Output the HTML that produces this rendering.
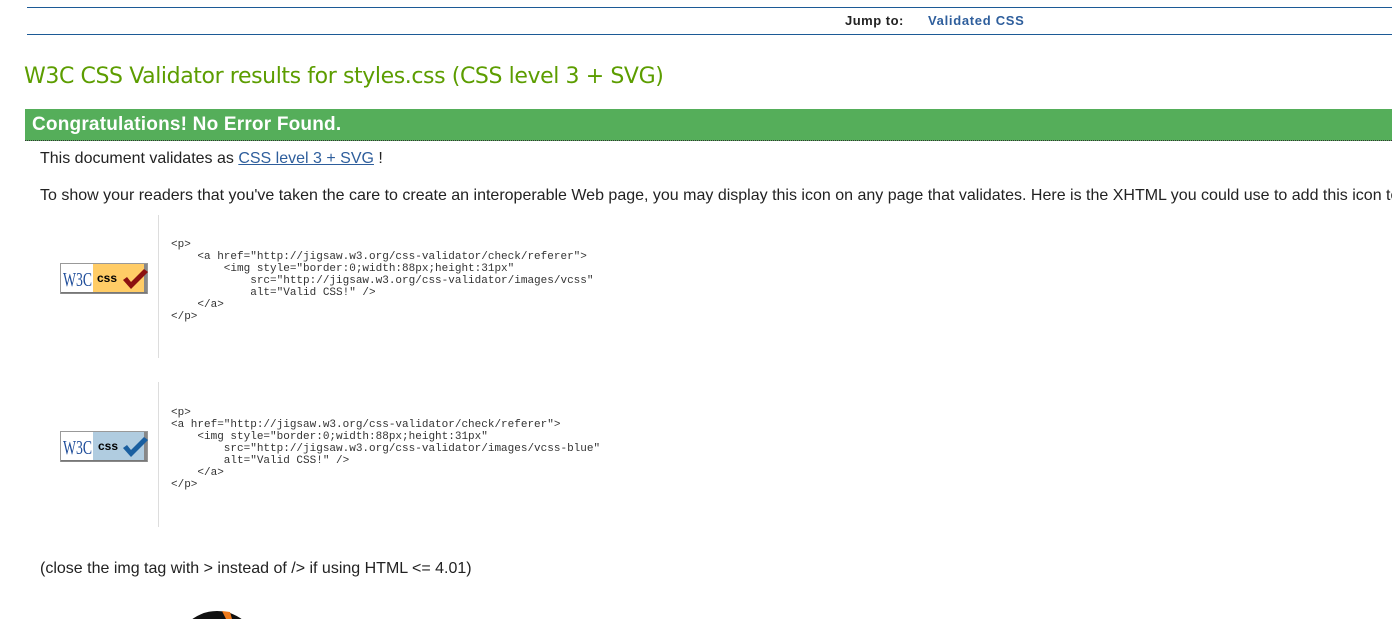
<!DOCTYPE html>
<html><head><meta charset="utf-8"><style>
html,body{margin:0;background:#fff;font-family:"Liberation Sans",Arial,sans-serif;width:1392px;height:619px;overflow:hidden;position:relative}
.a{position:absolute;white-space:pre}
.hl{position:absolute;left:27px;right:0;height:1px;background:#1c5a96}
pre{position:absolute;margin:0;font-family:"Liberation Mono",monospace;font-size:11px;line-height:12px;color:#333}
.vl{position:absolute;left:158px;width:1px;background:#ddd}
</style></head><body>
<div class="hl" style="top:7px"></div>
<div class="hl" style="top:34px"></div>
<div class="a" style="left:845px;top:13px;font-size:13px;font-weight:bold;color:#222;letter-spacing:0.5px">Jump to:</div>
<div class="a" style="left:928px;top:13px;font-size:13px;font-weight:bold;color:#2e5e9c;letter-spacing:0.7px">Validated CSS</div>
<div class="a" style="left:24px;top:64px;font-family:'DejaVu Sans',sans-serif;font-size:22px;color:#5c9d00;letter-spacing:-0.4px">W3C CSS Validator results for styles.css (CSS level 3 + SVG)</div>
<div style="position:absolute;left:25px;right:0;top:109px;height:31px;background:#55ae5a;border-bottom:1px dotted #333"></div>
<div class="a" style="left:32px;top:114px;font-size:19px;font-weight:bold;color:#fff;letter-spacing:0.2px">Congratulations! No Error Found.</div>
<div class="a" style="left:40px;top:150px;font-size:16px;color:#222">This document validates as <span style="color:#2e5e9c;text-decoration:underline">CSS level 3 + SVG</span> !</div>
<div class="a" style="left:40px;top:187px;font-size:16px;color:#222">To show your readers that you've taken the care to create an interoperable Web page, you may display this icon on any page that validates. Here is the XHTML you could use to add this icon to</div>
<div class="vl" style="top:215px;height:143px"></div>
<div class="vl" style="top:382px;height:145px"></div>
<svg style="position:absolute;left:60px;top:263px" width="88" height="31"><rect x="0.5" y="0.5" width="87" height="30" fill="#fff" stroke="#999"/><rect x="33" y="1" width="51" height="29" fill="#ffcc66"/><rect x="84" y="1" width="3" height="29" fill="#888"/><rect x="1" y="29" width="86" height="1.5" fill="#777"/><text x="3" y="23" font-family="Liberation Serif" font-size="20" fill="#1f4d9a" textLength="29" lengthAdjust="spacingAndGlyphs">W3C</text><text x="37" y="19" font-family="Liberation Sans" font-weight="bold" font-size="12" fill="#000">css</text><path d="M63 17 L71 26 L88 9 L84 6 L71 19 L67 14Z" fill="#8b1010"/></svg>
<pre style="left:171px;top:239px">&lt;p&gt;
    &lt;a href="http://jigsaw.w3.org/css-validator/check/referer"&gt;
        &lt;img style="border:0;width:88px;height:31px"
            src="http://jigsaw.w3.org/css-validator/images/vcss"
            alt="Valid CSS!" /&gt;
    &lt;/a&gt;
&lt;/p&gt;</pre>
<svg style="position:absolute;left:60px;top:431px" width="88" height="31"><rect x="0.5" y="0.5" width="87" height="30" fill="#fff" stroke="#999"/><rect x="33" y="1" width="51" height="29" fill="#b0cce0"/><rect x="84" y="1" width="3" height="29" fill="#888"/><rect x="1" y="29" width="86" height="1.5" fill="#777"/><text x="3" y="23" font-family="Liberation Serif" font-size="20" fill="#1f4d9a" textLength="29" lengthAdjust="spacingAndGlyphs">W3C</text><text x="38" y="19" font-family="Liberation Sans" font-weight="bold" font-size="12" fill="#000">css</text><path d="M63 17 L71 26 L88 9 L84 6 L71 19 L67 14Z" fill="#1a5fa0"/></svg>
<pre style="left:171px;top:407px">&lt;p&gt;
&lt;a href="http://jigsaw.w3.org/css-validator/check/referer"&gt;
    &lt;img style="border:0;width:88px;height:31px"
        src="http://jigsaw.w3.org/css-validator/images/vcss-blue"
        alt="Valid CSS!" /&gt;
    &lt;/a&gt;
&lt;/p&gt;</pre>
<div class="a" style="left:40px;top:560px;font-size:16px;color:#222">(close the img tag with &gt; instead of /&gt; if using HTML &lt;= 4.01)</div>
<svg style="position:absolute;left:180px;top:608px" width="80" height="11"><circle cx="37" cy="45" r="42" fill="#111"/><path d="M42 3 L50 4 L52 11 L46 11Z" fill="#f07a1a"/></svg>
</body></html>
